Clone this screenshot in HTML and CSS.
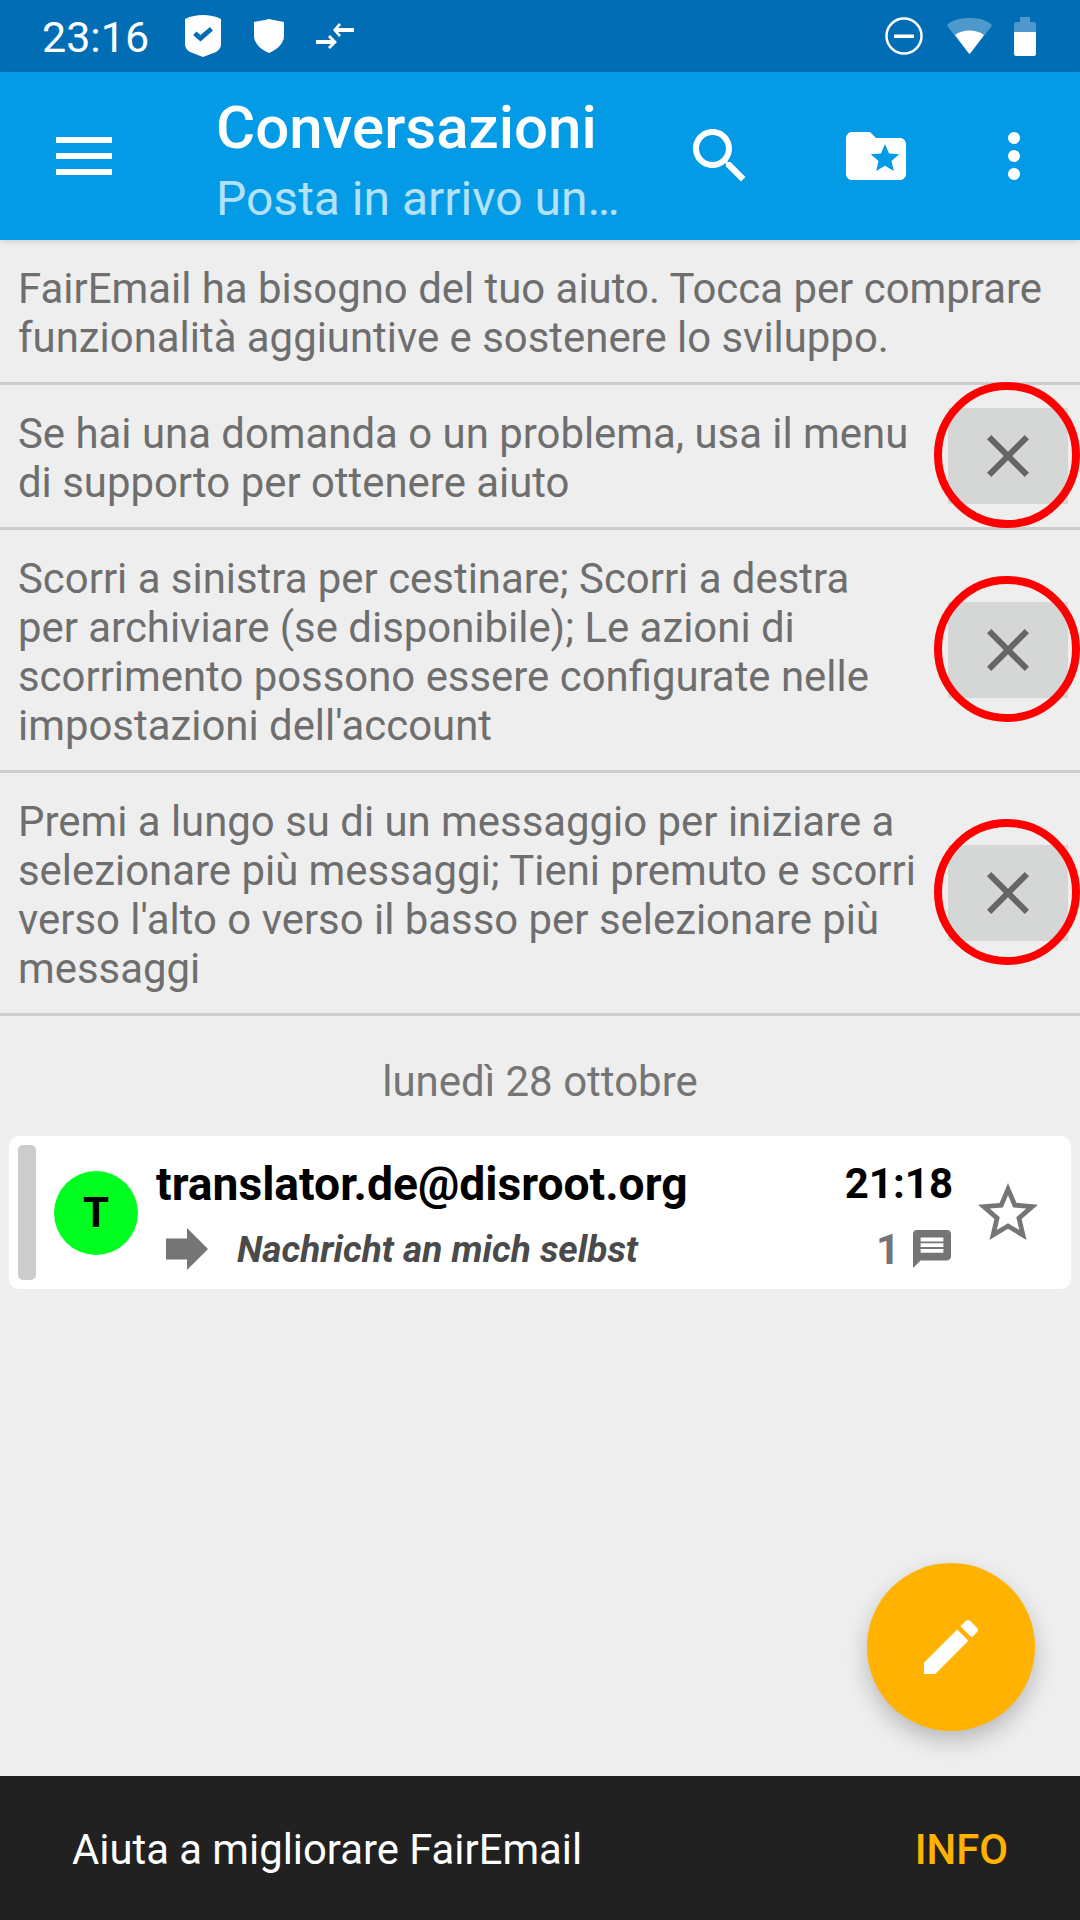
FILE: index.html
```html
<!DOCTYPE html>
<html lang="it">
<head>
    <meta charset="UTF-8">
    <meta name="viewport" content="width=device-width, initial-scale=1.0">
    <title>FairEmail</title>
    <link rel="stylesheet" href="styles.css">
</head>
<body>
    <div class="statusbar">
        <span class="clock">23:16</span>
        <svg class="st-guard" viewBox="0 0 36 42"><path fill="#fff" fill-rule="evenodd" d="M0 4C6 1 12 0 18 0S30 1 36 4V29C36 33 34 35 31 37L18 42 5 37C2 35 0 33 0 29ZM8 20 11.500 16.500 15.500 20 25 12 28 15.500 15.500 26.500Z"/></svg>
        <svg class="st-shield" viewBox="0 0 30 34"><path fill="#fff" d="M0 3C5 2 11 1 15 0 19 1 25 2 30 3V17C30 25 22 31 15 34 8 31 0 25 0 17Z"/></svg>
        <svg class="st-arrows" viewBox="0 0 38 26"><path fill="#fff" d="M23 0 17 7 23 14 25 12 22 9H38V5H22L25 2Z"/><path fill="#fff" d="M14 12 21 19 14 26 12 24 15 21H0V17H15L12 14Z"/></svg>
        <span class="status-gap"></span>
        <svg class="st-dnd" viewBox="0 0 38 38"><circle cx="19" cy="19" r="17.500" fill="none" stroke="#fff" stroke-width="2.500"/><rect x="9" y="17.500" width="20" height="3.500" fill="#fff"/></svg>
        <svg class="st-wifi" viewBox="0 0 45 36"><path fill="#fff" fill-opacity=".3" d="M22.500 0C32 0 39 2 44 6 45 7 45 8 44 9L23.500 35C23 36 22 36 21.500 35L1 9C0 8 0 7 1 6 6 2 13 0 22.500 0Z"/><path fill="#fff" d="M8 17C15 11 30 11 37 17L23.500 35C23 36 22 36 21.500 35Z"/></svg>
        <svg class="st-battery" viewBox="0 0 22 39"><path fill="#fff" fill-opacity=".3" d="M6 0H16V5H20C21 5 22 6 22 7V16H0V7C0 6 1 5 2 5H6Z"/><path fill="#fff" d="M0 15H22V37C22 38 21 39 20 39H2C1 39 0 38 0 37Z"/></svg>
    </div>

    <header class="toolbar">
        <svg class="nav-icon" viewBox="0 0 56 38"><rect width="56" height="6"/><rect y="16" width="56" height="6"/><rect y="32" width="56" height="6"/></svg>
        <div class="titles">
            <div class="title">Conversazioni</div>
            <div class="subtitle">Posta in arrivo un…</div>
        </div>
        <svg class="bar-icon search" viewBox="0 0 24 24"><path d="M15.500 14h-.79l-.28-.27C15.410 12.590 16 11.110 16 9.500 16 5.910 13.090 3 9.500 3S3 5.910 3 9.500 5.910 16 9.500 16c1.610 0 3.090-.59 4.230-1.570l.27.28v.79l5 4.990L20.490 19l-4.990-5zm-6 0C7.010 14 5 11.990 5 9.500S7.010 5 9.500 5 14 7.010 14 9.500 11.990 14 9.500 14z"/></svg>
        <svg class="bar-icon folder" viewBox="0 0 24 24"><path d="M20 6h-8l-2-2H4c-1.100 0-1.990.9-1.990 2L2 18c0 1.100.9 2 2 2h16c1.100 0 2-.9 2-2V8c0-1.100-.9-2-2-2zm-2.060 11L15 15.280 12.060 17l.78-3.330-2.590-2.240 3.410-.29L15 8l1.340 3.140 3.410.29-2.590 2.240.78 3.330z"/></svg>
        <svg class="bar-icon more" viewBox="0 0 24 24"><circle cx="12" cy="6" r="2"/><circle cx="12" cy="12" r="2"/><circle cx="12" cy="18" r="2"/></svg>
    </header>

    <main class="content">
        <div class="tip">
            <p>FairEmail ha bisogno del tuo aiuto. Tocca per comprare funzionalità aggiuntive e sostenere lo sviluppo.</p>
        </div>
        <div class="tip">
            <p>Se hai una domanda o un problema, usa il menu di supporto per ottenere aiuto</p>
            <div class="dismiss">
                <svg viewBox="0 0 24 24"><path d="M19 6.410L17.590 5 12 10.590 6.410 5 5 6.410 10.590 12 5 17.590 6.410 19 12 13.410 17.590 19 19 17.590 13.410 12z"/></svg>
                <span class="ring"></span>
            </div>
        </div>
        <div class="tip">
            <p>Scorri a sinistra per cestinare; Scorri a destra per archiviare (se disponibile); Le azioni di scorrimento possono essere configurate nelle impostazioni dell'account</p>
            <div class="dismiss">
                <svg viewBox="0 0 24 24"><path d="M19 6.410L17.590 5 12 10.590 6.410 5 5 6.410 10.590 12 5 17.590 6.410 19 12 13.410 17.590 19 19 17.590 13.410 12z"/></svg>
                <span class="ring"></span>
            </div>
        </div>
        <div class="tip">
            <p>Premi a lungo su di un messaggio per iniziare a selezionare più messaggi; Tieni premuto e scorri verso l'alto o verso il basso per selezionare più messaggi</p>
            <div class="dismiss">
                <svg viewBox="0 0 24 24"><path d="M19 6.410L17.590 5 12 10.590 6.410 5 5 6.410 10.590 12 5 17.590 6.410 19 12 13.410 17.590 19 19 17.590 13.410 12z"/></svg>
                <span class="ring"></span>
            </div>
        </div>

        <div class="day">lunedì 28 ottobre</div>

        <div class="card">
            <div class="stripe"></div>
            <div class="avatar">T</div>
            <div class="card-body">
                <div class="card-top">
                    <span class="from">translator.de@disroot.org</span>
                    <span class="time">21:18</span>
                </div>
                <div class="card-bottom">
                    <svg class="fwd" viewBox="4 4 16 16"><path d="M12 8V4l8 8-8 8v-4H4V8z"/></svg>
                    <span class="subject">Nachricht an mich selbst</span>
                    <span class="count">1</span>
                    <svg class="msgs" viewBox="2 2 20 20"><path d="M20 2H4c-1.100 0-1.990.9-1.990 2L2 22l4-4h14c1.100 0 2-.9 2-2V4c0-1.100-.9-2-2-2zm-2 12H6v-2h12v2zm0-3H6V9h12v2zm0-3H6V6h12v2z"/></svg>
                </div>
            </div>
            <svg class="star" viewBox="0 0 24 24"><path d="M22 9.240l-7.190-.62L12 2 9.190 8.630 2 9.240l5.460 4.730L5.820 21 12 17.270 18.180 21l-1.630-7.030L22 9.240zM12 15.400l-3.760 2.270 1-4.280-3.320-2.880 4.380-.38L12 6.100l1.710 4.040 4.380.38-3.320 2.880 1 4.280L12 15.400z"/></svg>
        </div>

        <div class="fab">
            <svg viewBox="0 0 24 24"><path d="M3 17.250V21h3.750L17.810 9.940l-3.750-3.750L3 17.250zM20.710 7.040c.39-.39.39-1.020 0-1.410l-2.340-2.340c-.39-.39-1.020-.39-1.410 0l-1.830 1.830 3.750 3.750 1.830-1.830z"/></svg>
        </div>
    </main>

    <footer class="snackbar">
        <span>Aiuta a migliorare FairEmail</span>
        <span class="snack-action">INFO</span>
    </footer>
</body>
</html>
```

FILE: styles.css
```css
* {
    box-sizing: border-box;
}
html, body {
    margin: 0;
    height: 1920px;
    width: 1080px;
    overflow: hidden;
}
body {
    display: flex;
    flex-direction: column;
    background: #eeeeee;
    font-family: Roboto, "Noto Sans", sans-serif;
}

/* status bar */
.statusbar {
    height: 72px;
    background: #016db5;
    display: flex;
    align-items: center;
    padding: 0 44px 0 42px;
    color: #fff;
}
.clock {
    font-size: 43px;
    width: 143px;
    padding-top: 2px;
}
.st-guard {
    width: 36px;
    height: 42px;
    margin-right: 33px;
}
.st-shield {
    width: 30px;
    height: 34px;
    margin-right: 32px;
}
.st-arrows {
    width: 38px;
    height: 26px;
}
.status-gap {
    flex: 1;
}
.st-dnd {
    width: 38px;
    height: 38px;
    margin-right: 24px;
}
.st-wifi {
    width: 45px;
    height: 36px;
    margin-right: 22px;
}
.st-battery {
    width: 22px;
    height: 39px;
}

/* toolbar */
.toolbar {
    height: 168px;
    background: #039be5;
    display: flex;
    align-items: center;
    fill: #fff;
    position: relative;
    box-shadow: 0 2px 5px rgba(0, 0, 0, .12);
}
.nav-icon {
    width: 56px;
    height: 38px;
    margin-left: 56px;
    margin-right: 104px;
}
.titles {
    width: 468px;
    color: #fff;
    padding-top: 11px;
}
.title {
    font-size: 60px;
    font-weight: 500;
    line-height: 72px;
}
.subtitle {
    font-size: 48px;
    line-height: 64px;
    margin-top: 3px;
    color: #b3e1f7;
}
.bar-icon {
    width: 72px;
    height: 72px;
}
.folder {
    margin-left: 84px;
}
.more {
    margin-left: 66px;
}

/* tips */
.content {
    flex: 1;
    position: relative;
}
.tip {
    display: flex;
    align-items: center;
    padding: 0 12px 0 18px;
    border-bottom: 3px solid #cccccc;
    color: #6e6e6e;
    font-size: 41.900px;
    line-height: 49px;
}
.tip p {
    flex: 1;
    margin: 24px 0 20px;
}
.dismiss {
    position: relative;
    width: 120px;
    height: 96px;
    margin-left: 29px;
    background: #d5d7d6;
    display: flex;
    align-items: center;
    justify-content: center;
    flex-shrink: 0;
}
.dismiss svg {
    width: 72px;
    height: 72px;
    fill: #666666;
}
.ring {
    position: absolute;
    top: -26px;
    left: -14px;
    width: 146px;
    height: 146px;
    border: 8px solid #ff0000;
    border-radius: 50%;
}

.day {
    text-align: center;
    color: #757575;
    font-size: 42px;
    line-height: 48px;
    margin: 42px 0 30px;
}

/* message card */
.card {
    margin: 0 9px;
    height: 153px;
    background: #fff;
    border-radius: 10px;
    display: flex;
    align-items: center;
    padding: 0 9px;
}
.stripe {
    width: 18px;
    height: 135px;
    background: #cccccc;
    border-radius: 5px;
}
.avatar {
    width: 84px;
    height: 84px;
    margin: 0 18px;
    border-radius: 50%;
    background: #00ff21;
    color: #000;
    font-size: 42px;
    font-weight: 700;
    display: flex;
    align-items: center;
    justify-content: center;
}
.card-body {
    width: 797px;
    margin-top: 5px;
}
.card-top, .card-bottom {
    display: flex;
    align-items: center;
}
.from {
    flex: 1;
    font-size: 46.200px;
    font-weight: 700;
    color: #000;
}
.time {
    font-size: 42px;
    font-weight: 700;
    color: #000;
}
.card-bottom {
    margin-top: 14px;
}
.fwd {
    width: 42px;
    height: 42px;
    margin-left: 10px;
    fill: #757575;
}
.subject {
    flex: 1;
    margin-left: 29px;
    font-size: 37px;
    font-weight: 700;
    font-style: italic;
    color: #4a4a4a;
}
.count {
    font-size: 42px;
    font-weight: 700;
    color: #757575;
}
.msgs {
    width: 38px;
    height: 38px;
    margin-left: 13px;
    margin-right: 2px;
    fill: #757575;
}
.star {
    width: 72px;
    height: 72px;
    margin-left: 19px;
    fill: #757575;
}

.fab {
    position: absolute;
    left: 867px;
    top: 1323px;
    width: 168px;
    height: 168px;
    border-radius: 50%;
    background: #ffb300;
    box-shadow: 0 10px 22px rgba(0, 0, 0, .22);
    display: flex;
    align-items: center;
    justify-content: center;
}
.fab svg {
    width: 72px;
    height: 72px;
    fill: #fff;
}

.snackbar {
    height: 144px;
    background: #212121;
    color: #fff;
    display: flex;
    align-items: center;
    justify-content: space-between;
    padding: 2px 72px 0;
    font-size: 41.800px;
}
.snack-action {
    color: #ffb300;
    font-weight: 500;
}
```
